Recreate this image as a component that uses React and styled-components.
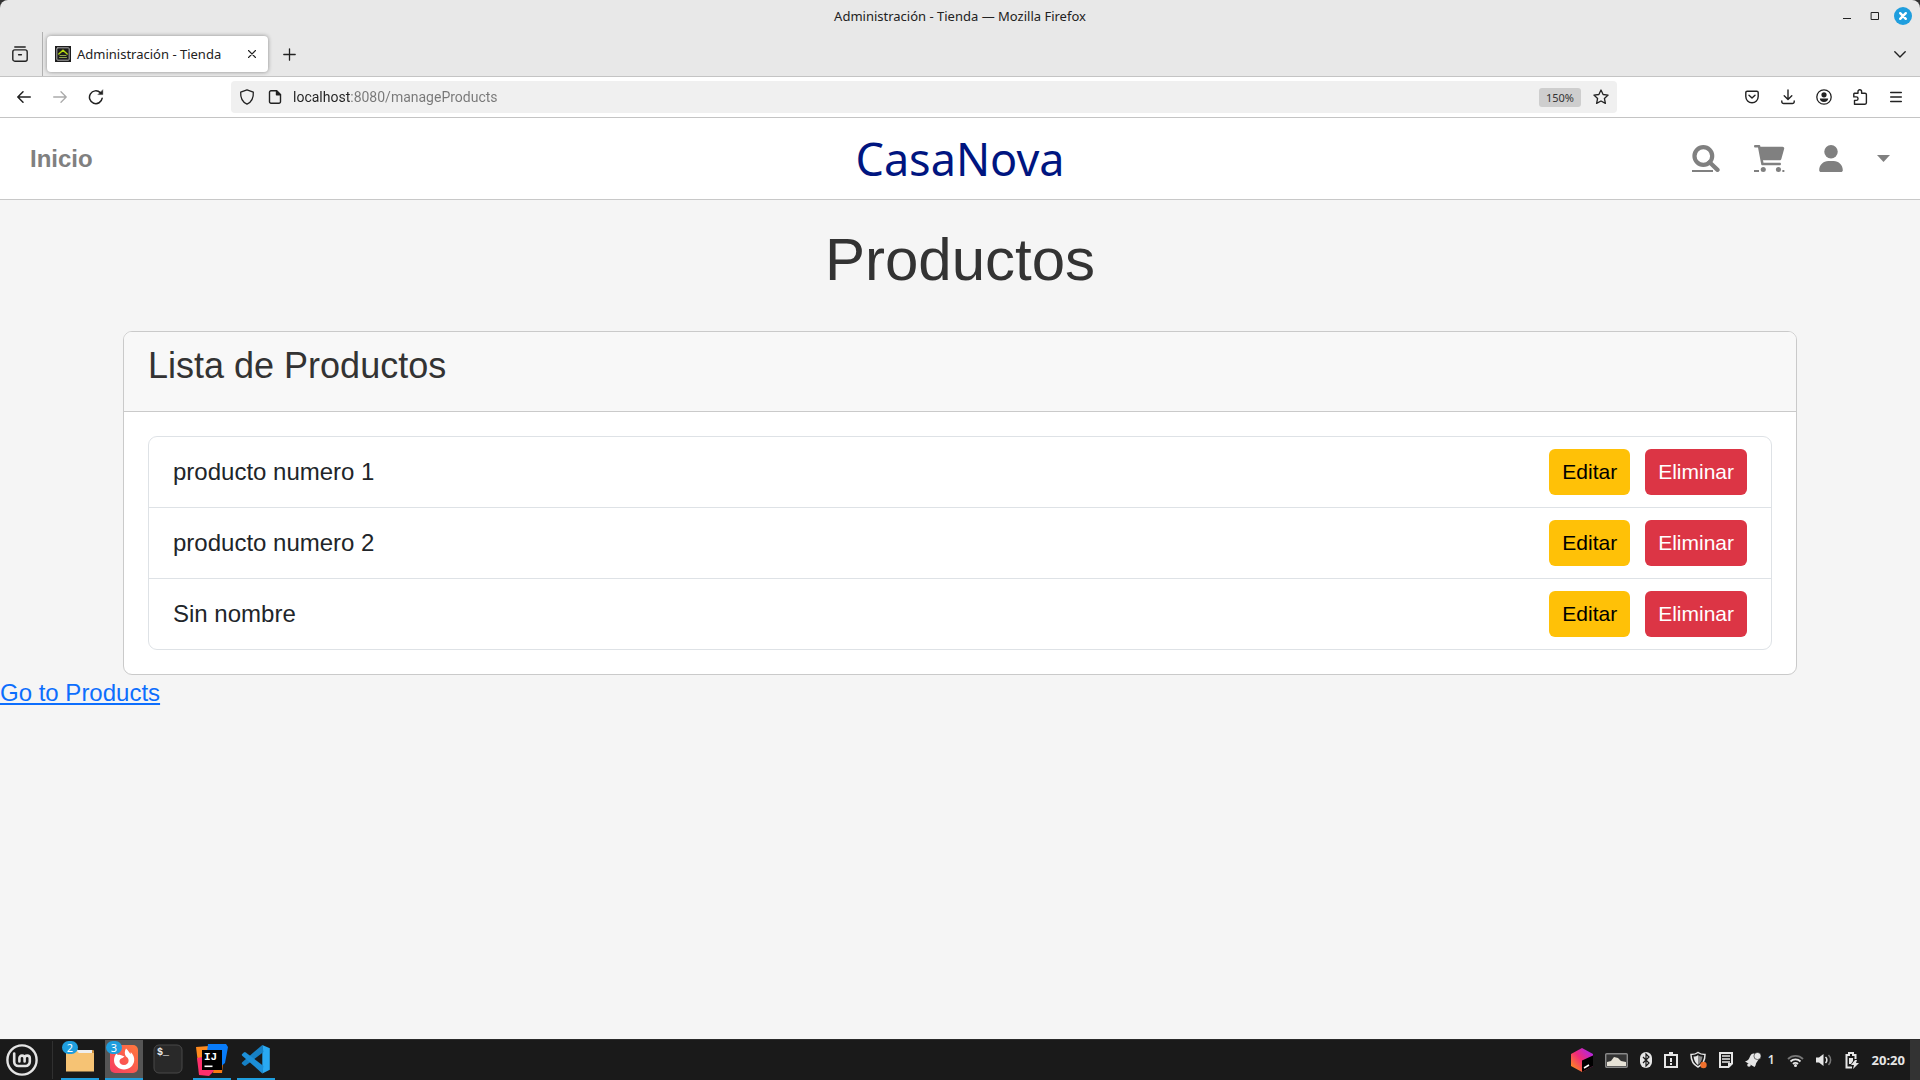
import React from "react";
import styled, { createGlobalStyle, css } from "styled-components";

const Global = createGlobalStyle`
  *, *::before, *::after { box-sizing: border-box; }
  body { margin: 0; background: #f5f5f5; font-family: "Liberation Sans", Arial, sans-serif; }
  button { font: inherit; cursor: pointer; }
  svg { display: block; }
`;

const uiFont = `"Noto Sans", sans-serif`;

const Screen = styled.div`
  display: flex;
  flex-direction: column;
  min-height: 100vh;
`;

/* ---------- browser window ---------- */
const Corner = styled.div`
  background: #333;
`;
const Chrome = styled.header`
  font-family: ${uiFont};
  color: #222;
  background: #e8e8e8;
  border-radius: 8px 8px 0 0;
  overflow: hidden;
`;
const TitleBar = styled.div`
  display: grid;
  grid-template-columns: 1fr auto 1fr;
  align-items: center;
  height: 32px;
  padding: 0 8px;
`;
const WindowTitle = styled.span`
  grid-column: 2;
  font-size: 13px;
  line-height: 16px;
`;
const WindowButtons = styled.div`
  display: flex;
  justify-content: flex-end;
  gap: 10px;
`;
const IconButton = styled.button`
  display: flex;
  align-items: center;
  justify-content: center;
  flex: none;
  width: ${(p) => p.$w || 36}px;
  height: ${(p) => p.$h || 32}px;
  padding: 0;
  border: 0;
  background: none;
  color: ${(p) => p.$color || "#222"};
`;
const TabStrip = styled.div`
  display: flex;
  height: 45px;
  border-bottom: 1px solid #c4c4c4;
`;
const TabsView = styled.div`
  display: flex;
  align-items: center;
  width: 43px;
  padding-left: 4px;
  border-right: 1px solid #b0b0b0;
`;
const Tab = styled.div`
  display: flex;
  align-items: center;
  width: 221px;
  height: 36px;
  margin: 4px 4px 4px;
  padding: 0 4px 0 8px;
  gap: 6px;
  border-radius: 4px;
  background: #fff;
  box-shadow: 0 0 4px rgba(0, 0, 0, 0.4);
`;
const TabLabel = styled.span`
  flex: 1;
  font-size: 13px;
  line-height: 20px;
  white-space: nowrap;
`;
const Spacer = styled.div`
  flex: 1;
`;
const Toolbar = styled.div`
  display: flex;
  align-items: center;
  height: 41px;
  padding: 0 6px;
  background: #fff;
  border-bottom: 1px solid #c4c4c4;
`;
const UrlBar = styled.label`
  display: flex;
  align-items: center;
  flex: 1;
  height: 32px;
  margin: 0 117px;
  padding-left: 2px;
  border-radius: 4px;
  background: #f0f0f0;
`;
const UrlInput = styled.input`
  flex: 1;
  min-width: 0;
  margin-left: 4px;
  padding: 0;
  border: 0;
  outline: 0;
  font-family: Roboto, sans-serif;
  font-size: 14px;
  line-height: 24px;
  color: transparent;
  background: linear-gradient(90deg, #222 57px, #777 57px);
  background-clip: text;
`;
const ZoomLevel = styled.button`
  height: 19px;
  width: 42px;
  margin-right: 4px;
  padding: 0;
  border: 0;
  border-radius: 3px;
  background: #cecece;
  color: #333;
  font-size: 11px;
  line-height: 19px;
`;

/* ---------- shop page ---------- */
const Navbar = styled.nav`
  display: grid;
  grid-template-columns: 1fr auto 1fr;
  align-items: center;
  height: 82px;
  padding: 0 30px;
  background: #fff;
  border-bottom: 1px solid #c8c8c8;
`;
const HomeLink = styled.a`
  justify-self: start;
  color: #808080;
  font-size: 24px;
  font-weight: 700;
  line-height: 36px;
  text-decoration: none;
`;
const Brand = styled.span`
  color: #001580;
  font-family: ${uiFont};
  font-size: 45px;
  line-height: 72px;
`;
const NavActions = styled.div`
  display: flex;
  align-items: center;
  justify-content: flex-end;
`;
const NavIcon = styled.a`
  display: block;
  margin-right: 34px;
  color: #808080;
`;
const Caret = styled.button`
  width: 13px;
  height: 24px;
  padding: 0;
  border: 0;
  background: none;
  color: #808080;
`;
const Main = styled.main`
  flex: 1;
  background: #f5f5f5;
`;
const Container = styled.div`
  max-width: 1710px;
  margin: 0 auto;
  padding: 0 18px;
`;
const PageTitle = styled.h1`
  margin: 0;
  padding: 24px 0 35px;
  color: #333;
  font-size: 60px;
  font-weight: 400;
  line-height: 72px;
  text-align: center;
`;
const Card = styled.section`
  border: 1px solid #cacaca;
  border-radius: 9px;
  background: #fff;
  overflow: hidden;
`;
const CardHeader = styled.div`
  padding: 12px 24px 24px;
  border-bottom: 1px solid #cacaca;
  background: #f8f8f8;
`;
const CardTitle = styled.h2`
  margin: 0;
  color: #333;
  font-size: 36px;
  font-weight: 400;
  line-height: 43px;
`;
const CardBody = styled.div`
  padding: 24px;
`;
const List = styled.ul`
  margin: 0;
  padding: 0;
  list-style: none;
  border: 1px solid #dee2e6;
  border-radius: 9px;
`;
const Row = styled.li`
  display: flex;
  align-items: center;
  justify-content: space-between;
  padding: 12px 24px;
  color: #212529;
  font-size: 24px;
  line-height: 36px;
  & + & {
    border-top: 1px solid #dee2e6;
  }
`;
const RowActions = styled.div`
  display: flex;
  gap: 15px;
`;
const variants = {
  warning: css`
    background: #ffc107;
    color: #000;
  `,
  danger: css`
    background: #dc3545;
    color: #fff;
  `,
};
const ActionButton = styled.button`
  padding: 6px 13px;
  border: 0;
  border-radius: 6px;
  font-size: 21px;
  line-height: 34px;
  ${(p) => variants[p.$variant]}
`;
const PageLink = styled.a`
  color: #0d6efd;
  font-size: 24px;
  line-height: 36px;
`;

/* ---------- desktop panel ---------- */
const Panel = styled.footer`
  display: flex;
  height: 41px;
  background: #1a1a1a;
  border-top: 1px solid #2a2a2a;
  color: #e6e6e6;
  font-family: ${uiFont};
`;
const MenuButton = styled(IconButton)`
  width: 44px;
  height: 40px;
`;
const PanelRule = styled.div`
  width: 1px;
  margin: 1px 8px;
  background: #303030;
`;
const Launchers = styled.div`
  display: flex;
  gap: 6px;
`;
const Launcher = styled.button`
  position: relative;
  display: flex;
  justify-content: center;
  width: 38px;
  height: 40px;
  padding: 4px 0 0;
  border: 0;
  border-bottom: 2px solid ${(p) => (p.$open ? "#1f9ede" : "transparent")};
  background: ${(p) => (p.$active ? "#555" : "none")};
`;
const Badge = styled.span`
  position: absolute;
  top: 1px;
  left: 1px;
  width: 16px;
  height: 13px;
  border-radius: 7px;
  background: #1f9ede;
  color: #fff;
  font-size: 11px;
  line-height: 13px;
  text-align: center;
`;
const Tray = styled.div`
  display: flex;
  align-items: center;
  gap: 12px;
  margin-right: 5px;
`;
const Notices = styled.span`
  display: flex;
  align-items: center;
  gap: 6px;
  font-size: 12px;
  font-weight: 600;
  line-height: 16px;
`;
const Clock = styled.time`
  font-size: 13px;
  font-weight: 700;
  line-height: 16px;
`;
const ShowDesktop = styled.button`
  width: 10px;
  padding: 0;
  border: 0;
  background: #333;
`;

const Svg = ({ s = 16, w, h, vb, children, sw = 1.4, ...rest }) => (
  <svg
    width={w || s}
    height={h || s}
    viewBox={vb || `0 0 ${w || s} ${h || s}`}
    fill="none"
    stroke="currentColor"
    strokeWidth={sw}
    strokeLinecap="round"
    strokeLinejoin="round"
    aria-hidden="true"
    {...rest}
  >
    {children}
  </svg>
);

const products = ["producto numero 1", "producto numero 2", "Sin nombre"];

function BrowserChrome() {
  return (
    <Corner>
      <Chrome>
        <TitleBar>
          <WindowTitle>Administración - Tienda — Mozilla Firefox</WindowTitle>
          <WindowButtons>
            <IconButton $w={18} $h={18} aria-label="Minimizar">
              <Svg s={18} sw={1} strokeLinecap="butt"><path d="M5 11.5h8" /></Svg>
            </IconButton>
            <IconButton $w={18} $h={18} aria-label="Maximizar">
              <Svg s={18} sw={1}><rect x="5.5" y="5.5" width="7" height="7" /></Svg>
            </IconButton>
            <IconButton $w={18} $h={18} aria-label="Cerrar">
              <Svg s={18} sw={2.4}>
                <circle cx="9" cy="9" r="9" fill="#1f9ede" stroke="none" />
                <path d="M6.2 6.2l5.6 5.6M11.8 6.2l-5.6 5.6" stroke="#fff" />
              </Svg>
            </IconButton>
          </WindowButtons>
        </TitleBar>
        <TabStrip>
          <TabsView>
            <IconButton $w={32} aria-label="Ver pestañas">
              <Svg s={16}>
                <path d="M2.8 1h10.4" />
                <rect x="0.8" y="3.9" width="14.4" height="11.3" rx="2" />
                <path d="M6.6 8.7h2.8" />
              </Svg>
            </IconButton>
          </TabsView>
          <Tab>
            <Svg s={16} sw={1} strokeLinejoin="miter">
              <rect width="16" height="16" fill="#1c1c1c" stroke="none" />
              <rect x="1.8" y="1.8" width="12.4" height="12.4" rx="1" stroke="#aaa" />
              <path d="M3.8 8L8 4.200l4.200 3.800" stroke="#b5d90c" strokeWidth="1.4" />
              <path d="M5 9.500h6M4.500 11.500h7" stroke="#8fa34a" />
            </Svg>
            <TabLabel>Administración - Tienda</TabLabel>
            <IconButton $w={24} $h={24} aria-label="Cerrar pestaña">
              <Svg s={8} sw={1.1}><path d="M.5 .5l7 7M7.500 .5l-7 7" /></Svg>
            </IconButton>
          </Tab>
          <IconButton $w={34} $h={44} aria-label="Nueva pestaña">
            <Svg s={13} sw={1.3}><path d="M6.500 .8v11.400M.8 6.500h11.400" /></Svg>
          </IconButton>
          <Spacer />
          <IconButton $w={40} $h={44} aria-label="Listar pestañas">
            <Svg w={12} h={7}><path d="M.8 .8L6 6l5.200-5.200" /></Svg>
          </IconButton>
        </TabStrip>
        <Toolbar>
          <IconButton aria-label="Atrás">
            <Svg w={14} h={12} sw={1.5}><path d="M13.300 6H1M6 .8L.8 6 6 11.200" /></Svg>
          </IconButton>
          <IconButton $color="#aaa" aria-label="Adelante">
            <Svg w={14} h={12} sw={1.3}><path d="M.7 6H13M8 .8L13.200 6 8 11.200" /></Svg>
          </IconButton>
          <IconButton aria-label="Recargar">
            <Svg s={16} sw={1.5}>
              <path d="M14.200 9.200A6.400 6.400 0 1 1 12.300 3.600" />
              <path d="M14.800 1v4.600h-4.600z" fill="currentColor" strokeWidth=".4" />
            </Svg>
          </IconButton>
          <UrlBar>
            <IconButton $w={28} aria-label="Protección">
              <Svg s={16} sw={1.3}>
                <path d="M8 .8l6.300 2.400c.4 5.600-1.700 9.700-6.300 12C3.400 12.900 1.300 8.800 1.700 3.200z" />
              </Svg>
            </IconButton>
            <IconButton $w={28} aria-label="Información del sitio">
              <Svg w={14} h={16} sw={1.4}>
                <path d="M8.500 1.700H3a1.500 1.500 0 0 0-1.500 1.500v9.600A1.500 1.500 0 0 0 3 14.300h8a1.500 1.500 0 0 0 1.500-1.500V5.700z" />
                <path d="M8.500 1.700v4h4z" fill="currentColor" />
              </Svg>
            </IconButton>
            <UrlInput aria-label="Dirección" defaultValue="localhost:8080/manageProducts" />
            <ZoomLevel>150%</ZoomLevel>
            <IconButton $w={32} aria-label="Añadir a marcadores">
              <Svg s={16} sw={1.3}>
                <path d="M8 1l2.100 4.500 5 .6-3.700 3.400 1 4.900L8 12l-4.400 2.400 1-4.900L.9 6.100l5-.6z" />
              </Svg>
            </IconButton>
          </UrlBar>
          <IconButton aria-label="Pocket">
            <Svg w={14} h={14} sw={1.4}>
              <path d="M2.200 1.200h9.600a1.400 1.400 0 0 1 1.400 1.400V6.500a6.200 6.200 0 0 1-12.400 0V2.600a1.400 1.400 0 0 1 1.400-1.400z" />
              <path d="M4 5.200l3 2.900 3-2.900" />
            </Svg>
          </IconButton>
          <IconButton aria-label="Descargas">
            <Svg w={14} h={16}>
              <path d="M7 1v9.300M3.200 6.800L7 10.500l3.800-3.700M.8 12v.7A1.800 1.800 0 0 0 2.600 14.500h8.800a1.800 1.800 0 0 0 1.800-1.800V12" />
            </Svg>
          </IconButton>
          <IconButton aria-label="Cuenta">
            <Svg s={16} sw={1.3}>
              <circle cx="8" cy="8" r="7.200" />
              <circle cx="8" cy="5.800" r="2.600" fill="currentColor" stroke="none" />
              <path d="M3.800 9.500h8.400c0 2-1.700 3.400-4.200 3.400s-4.200-1.400-4.200-3.400z" fill="currentColor" stroke="none" />
            </Svg>
          </IconButton>
          <IconButton aria-label="Extensiones">
            <Svg s={16}>
              <path d="M2.500 4.200H6V2.600a1.800 1.800 0 0 1 3.600 0v1.600h3.400a1.400 1.400 0 0 1 1.400 1.400v8.200a1.400 1.400 0 0 1-1.400 1.400H2.500V11.400h1.800a1.700 1.700 0 0 0 0-3.500H1.800V5a.8.8 0 0 1 .7-.8z" />
            </Svg>
          </IconButton>
          <IconButton aria-label="Menú">
            <Svg w={12} h={12} sw={1.3}><path d="M.6 1.500h10.800M.6 6h10.800M.6 10.500h10.800" /></Svg>
          </IconButton>
        </Toolbar>
      </Chrome>
    </Corner>
  );
}

function ShopNav() {
  return (
    <Navbar>
      <HomeLink href="#inicio">Inicio</HomeLink>
      <Brand>CasaNova</Brand>
      <NavActions>
        <NavIcon href="#buscar" aria-label="Buscar">
          <svg width="28" height="27" viewBox="0 0 531 512" fill="none" stroke="currentColor" strokeWidth="80">
            <circle cx="215" cy="208" r="168" />
            <path d="M334 327L484 472" strokeLinecap="round" />
            <path d="M0 493h398" strokeWidth="38" />
          </svg>
        </NavIcon>
        <NavIcon href="#carrito" aria-label="Carrito">
          <svg width="31" height="27" viewBox="0 0 588 512" fill="currentColor">
            <path d="M96 0C107.500 0 117.400 8.190 119.600 19.510L121.100 32H541.800C562.100 32 578.300 52.250 572.600 72.660L518.600 264.700C514.700 278.500 502.100 288 487.800 288H170.700L179.900 336H488C501.300 336 512 346.700 512 360C512 373.300 501.300 384 488 384H159.100C148.500 384 138.600 375.800 136.400 364.500L76.140 48H24C10.750 48 0 37.250 0 24C0 10.750 10.750 0 24 0H96z" />
            <circle cx="176" cy="464" r="48" />
            <circle cx="464" cy="464" r="48" />
            <path d="M0 474h95v38H0zM538 474h38v38h-38z" />
          </svg>
        </NavIcon>
        <NavIcon href="#cuenta" aria-label="Cuenta">
          <svg width="24" height="27" viewBox="0 0 448 512" fill="currentColor">
            <circle cx="224" cy="128" r="128" />
            <path d="M274.700 304H173.300C77.610 304 0 381.600 0 477.300c0 19.140 15.520 34.670 34.660 34.670h378.700C432.500 512 448 496.500 448 477.300C448 381.600 370.400 304 274.700 304z" />
          </svg>
        </NavIcon>
        <Caret aria-label="Más opciones">
          <svg width="13" height="7" viewBox="0 0 13 7" fill="currentColor"><path d="M0 0h13L6.500 7z" /></svg>
        </Caret>
      </NavActions>
    </Navbar>
  );
}

function MintLogo() {
  return (
    <Svg s={32} sw={2.6} stroke="#e4e4e4">
      <circle cx="16" cy="16" r="14.600" strokeWidth="2.400" />
      <path d="M8.200 9.500v8.300a4.200 4.200 0 0 0 4.200 4.200h7.200a4.200 4.200 0 0 0 4.200-4.200v-3.600a2.600 2.600 0 0 0-5.200 0v3.300M18.600 17.500v-3.300a2.600 2.600 0 0 0-5.200 0v3.300" />
    </Svg>
  );
}

function DesktopPanel() {
  return (
    <Panel>
      <MenuButton aria-label="Menú de inicio"><MintLogo /></MenuButton>
      <PanelRule />
      <Launchers>
        <Launcher $open aria-label="Archivos">
          <svg width="30" height="30" viewBox="0 0 30 30">
            <path d="M1 4h10l2 2h15a1 1 0 0 1 1 1v3H1z" fill="#c98e3c" />
            <path d="M2 6h25v4H2z" fill="#eee" />
            <path d="M1 6h10l3 3h15v18.500H1z" fill="#f6c374" />
          </svg>
          <Badge>2</Badge>
        </Launcher>
        <Launcher $open $active aria-label="Firefox">
          <svg width="30" height="30" viewBox="0 0 30 30">
            <defs>
              <linearGradient id="fox" x1="1" y1="0" x2="0" y2="1">
                <stop offset="0" stopColor="#ff7a3c" />
                <stop offset="1" stopColor="#f73c62" />
              </linearGradient>
            </defs>
            <rect x="1" y="1" width="28" height="28" rx="5" fill="url(#fox)" />
            <path fillRule="evenodd" fill="#fff" d="M17 4.500c2.500 2 3 4 4.500 5.500.4-.6.4-1.200.2-2 2.600 2.400 3.800 5.300 3.500 8.600-.5 5.200-4.900 9-10.200 9S5 21.500 5 16.300c0-3 1-5.500 3-7.300 0 1 .3 1.700 1 2 1.200-.5 2.300-.4 3.300.2l3.200 1.300-2 1.500c-2 .6-3 1.700-3 3.200 0 2.200 2 3.700 4.500 3.700s4.600-1.700 4.600-4.200c0-2-1-3.400-2.600-4.200-1.600-2.200-1.600-5.300 0-8z" />
          </svg>
          <Badge>3</Badge>
        </Launcher>
        <Launcher aria-label="Terminal">
          <svg width="30" height="30" viewBox="0 0 30 30">
            <rect x="1" y="1" width="28" height="28" rx="5" fill="#292929" stroke="#484848" />
            <text x="4" y="11" fill="#eee" fontFamily="Liberation Mono, monospace" fontSize="10" fontWeight="700">$_</text>
          </svg>
        </Launcher>
        <Launcher $open aria-label="IntelliJ IDEA">
          <svg width="34" height="33" viewBox="0 0 34 33">
            <path d="M1 3l13-1v15L3 19z" fill="#ff8a1e" />
            <path d="M2 14l10-2 10 12-8 8-10-1z" fill="#fd2f6c" />
            <path d="M20 20l8-1-1 10h-9z" fill="#f97a12" />
            <path d="M13 0h18l2 3-3 16-6 5L12 8z" fill="#087cfa" />
            <rect x="7" y="6" width="20" height="20" fill="#000" />
            <text x="9" y="16" fill="#fff" fontFamily="Liberation Mono, monospace" fontSize="11" fontWeight="700">IJ</text>
            <path d="M9.500 21.500h8v1.600h-8z" fill="#fff" />
          </svg>
        </Launcher>
        <Launcher $open aria-label="Visual Studio Code">
          <svg width="30" height="30" viewBox="0 0 100 100">
            <path d="M71 3L96 14v72L71 98z" fill="#29a9f2" />
            <path d="M71 3L4 61q-3 3 0 6l6 5q3 2 6 0L75 27z" fill="#1680c4" />
            <path d="M71 98L4 39q-3-3 0-6l6-5q3-2 6 0l59 45z" fill="#1c8fd8" />
          </svg>
        </Launcher>
      </Launchers>
      <Spacer />
      <Tray>
        <svg width="22" height="24" viewBox="0 0 22 24">
          <defs>
            <linearGradient id="box" x1="1" y1="0" x2="0" y2="1">
              <stop offset="0.1" stopColor="#b026e8" />
              <stop offset="0.5" stopColor="#f02a78" />
              <stop offset="0.9" stopColor="#ff8a1e" />
            </linearGradient>
          </defs>
          <path d="M11 0l11 6v12l-11 6L0 18V6z" fill="url(#box)" />
          <path d="M11 12.500L22 7.500V18l-11 6z" fill="#000" />
          <path d="M13 20l5-3" stroke="#fff" strokeWidth="1.500" />
        </svg>
        <svg width="23" height="15" viewBox="0 0 23 15">
          <rect x=".7" y=".7" width="21.600" height="13.600" rx="1" fill="#333" stroke="#888" strokeWidth="1.400" />
          <path d="M2 9l4-1 3-4 4 1 3 3 5 1v4H2z" fill="#e6e2d6" />
        </svg>
        <svg width="12" height="18" viewBox="0 0 12 18">
          <rect width="12" height="16" y="1" rx="6" fill="#e6e6e6" />
          <path d="M3 6l6 6-3 3V3l3 3-6 6" fill="none" stroke="#1a1a1a" strokeWidth="1.200" />
        </svg>
        <svg width="14" height="17" viewBox="0 0 14 17" fill="none" stroke="#e6e6e6" strokeWidth="2">
          <path d="M1 3h12v12H1z" />
          <path d="M5 0h4v4H5z" fill="#e6e6e6" stroke="none" />
          <path d="M7 6v4M7 11v2" />
        </svg>
        <svg width="17" height="18" viewBox="0 0 17 18">
          <path d="M8 1.500c2 1.500 4 2 7 2C15 9 13 13.500 8 16 3 13.500 1 9 1 3.500c3 0 5-.5 7-2z" fill="#1a1a1a" stroke="#e6e6e6" strokeWidth="1.500" />
          <path d="M8 4v10C5 12 4 9 3.500 5.500 5.500 5.500 7 5 8 4z" fill="#e6e6e6" />
          <path d="M8 4v10c3-2 4-5 4.500-8.500C10.500 5.500 9 5 8 4z" fill="#8a8a8a" />
          <circle cx="13.500" cy="14" r="3.200" fill="#f0702c" />
        </svg>
        <svg width="14" height="16" viewBox="0 0 14 16">
          <path d="M1 1h12v10.500l-3.500 3.500H1z" fill="none" stroke="#e6e6e6" strokeWidth="2" />
          <path d="M3 4h8M3 7h8M3 10h8" stroke="#e6e6e6" strokeWidth="1.400" />
          <path d="M9 15v-4h4z" fill="#e6e6e6" />
        </svg>
        <Notices>
          <svg width="17" height="16" viewBox="0 0 17 16" fill="#e6e6e6">
            <path d="M0 9.500C3 9 4 7 5 4.500 6 2 8 1 10 2l4 5c-1 2-3 3-3.500 6.500l-1 1.500z" />
            <circle cx="12.500" cy="4" r="3.600" stroke="#1a1a1a" strokeWidth=".6" />
            <circle cx="4" cy="13" r="1.800" />
          </svg>
          1
        </Notices>
        <svg width="17" height="13" viewBox="0 0 17 13" fill="none" strokeWidth="1.800">
          <path d="M1 5a10.500 10.500 0 0 1 15 0" stroke="#777" />
          <path d="M3.500 7.500a7 7 0 0 1 10 0M6 10a3.500 3.500 0 0 1 5 0" stroke="#e6e6e6" />
          <circle cx="8.500" cy="11.500" r="1.500" fill="#e6e6e6" />
        </svg>
        <svg width="17" height="14" viewBox="0 0 17 14" fill="none" strokeWidth="1.600">
          <path d="M0 4.500h3L7.500 1v12L3 9.500H0z" fill="#e6e6e6" />
          <path d="M9.500 4a4 4 0 0 1 0 6" stroke="#e6e6e6" />
          <path d="M12.500 2a7 7 0 0 1 0 10" stroke="#777" />
        </svg>
        <svg width="15" height="17" viewBox="0 0 15 17" fill="none" stroke="#e6e6e6" strokeWidth="2">
          <path d="M7 15.500H1.500V3H4V1h4v2h2.500v4" />
          <path d="M4 6h4v3l-2 3H4z" fill="#e6e6e6" stroke="none" />
          <path d="M10 8l-4 5h3l-1 4 6-6h-3l1-3z" fill="#e6e6e6" stroke="none" />
        </svg>
        <Clock>20:20</Clock>
      </Tray>
      <ShowDesktop aria-label="Mostrar escritorio" />
    </Panel>
  );
}

export default function App() {
  return (
    <Screen>
      <Global />
      <BrowserChrome />
      <ShopNav />
      <Main>
        <Container>
          <PageTitle>Productos</PageTitle>
          <Card>
            <CardHeader>
              <CardTitle>Lista de Productos</CardTitle>
            </CardHeader>
            <CardBody>
              <List>
                {products.map((name) => (
                  <Row key={name}>
                    <span>{name}</span>
                    <RowActions>
                      <ActionButton $variant="warning">Editar</ActionButton>
                      <ActionButton $variant="danger">Eliminar</ActionButton>
                    </RowActions>
                  </Row>
                ))}
              </List>
            </CardBody>
          </Card>
        </Container>
        <PageLink href="#products">Go to Products</PageLink>
      </Main>
      <DesktopPanel />
    </Screen>
  );
}
